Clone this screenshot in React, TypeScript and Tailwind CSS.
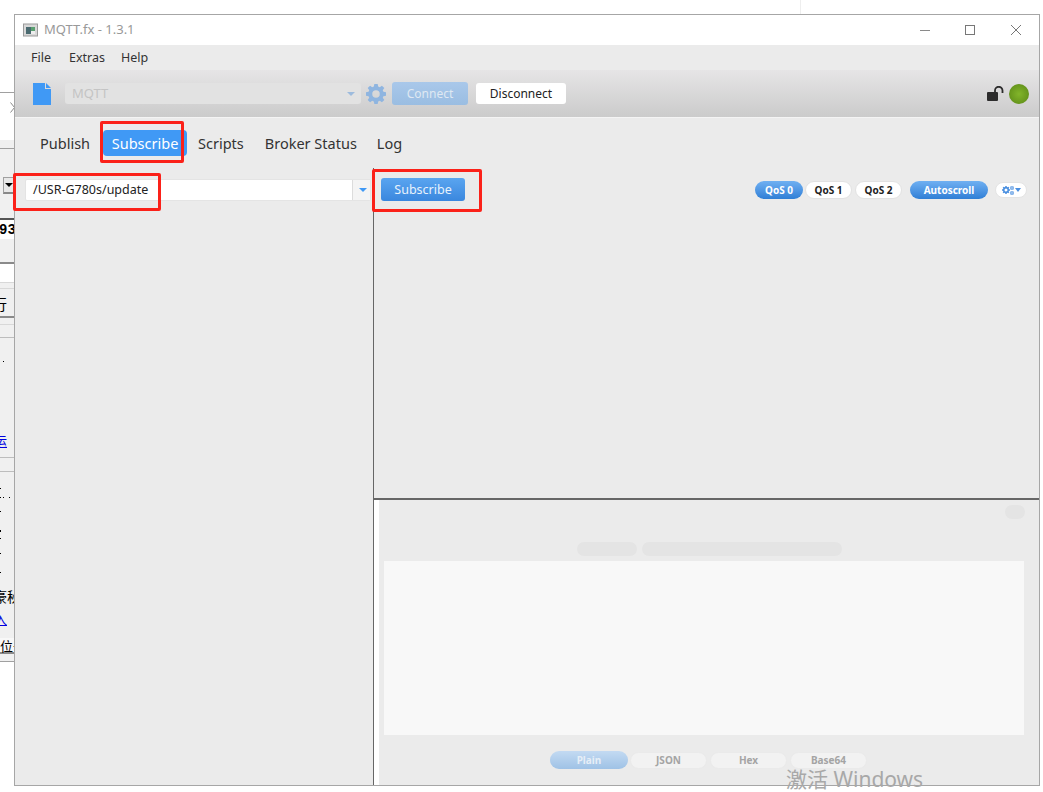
import React from "react";

const font = { fontFamily: '"Noto Sans", "Noto Sans CJK SC", sans-serif' };

const dots: [number, number][] = [
  [3, 361], [0, 488], [0, 497], [3, 497], [9, 497], [0, 511], [0, 530], [0, 531], [0, 538], [0, 553], [0, 572],
];

function Gear({ className, color }: { className?: string; color: string }) {
  return (
    <svg viewBox="0 0 24 24" className={className} fill={color}>
      <path d="M10 1h4l.6 3.100 1.900.8L19.100 3 22 5.900l-1.900 2.600.8 1.900L24 11v4l-3.100.6-.8 1.900 1.900 2.600-2.900 2.900-2.600-1.900-1.900.8L14 25h-4l-.6-3.100-1.900-.8L4.900 23 2 20.100l1.900-2.600-.8-1.900L0 15v-4l3.100-.6.8-1.900L2 5.900 4.900 3l2.600 1.900 1.900-.8zM12 8.500a4.500 4.500 0 1 0 0 9 4.500 4.500 0 0 0 0-9z" transform="translate(0 -1)" fillRule="evenodd" />
    </svg>
  );
}

function Pill({ children, on, className }: { children: React.ReactNode; on?: boolean; className: string }) {
  return (
    <div
      className={`flex h-[18px] items-center justify-center rounded-full text-[10px] font-bold ${
        on
          ? "bg-gradient-to-b from-[#6fb0f2] to-[#2f7fd6] text-white"
          : "border border-[#e2e2e2] bg-white text-[#222]"
      } ${className}`}
    >
      {children}
    </div>
  );
}

function Ghost({ children, className }: { children: React.ReactNode; className: string }) {
  return (
    <div className={`flex h-[17px] items-center justify-center rounded-full border border-[#eaeaea] bg-[#f2f2f2] text-[10px] font-bold text-[#a4a4a4] ${className}`}>
      {children}
    </div>
  );
}

function Strip() {
  return (
    <div className="relative h-full w-[14px] shrink-0 overflow-hidden bg-[#f0f0f0] text-black">
      {/* stacked bands of the window behind */}
      <div className="h-[92px] bg-white" />
      <div className="h-[48px] border-t border-[#a0a0a0] bg-white" />
      <div className="h-[8px]" />
      <div className="h-[70px] border-t border-[#a0a0a0]" />
      <div className="h-[21px] border-t-2 border-[#555] bg-white" />
      <div className="h-[23px]" />
      <div className="h-[2px] bg-[#8a8a8a]" />
      <div className="h-[18px] bg-white" />
      <div className="h-[7px] border-y border-[#d8d8d8]" />
      <div className="h-[27px]" />
      <div className="h-[2px] bg-[#8a8a8a]" />
      <div className="h-[6px]" />
      <div className="h-[13px] border-t border-[#d8d8d8]" />
      <div className="h-[120px] border-t border-[#bdbdbd]" />
      <div className="h-[14px] border-t border-[#bdbdbd]" />
      <div className="h-[167px] border-t border-[#bdbdbd]" />
      <div className="h-[14px] bg-[#f8f8f8]" />
      <div className="h-[2px] bg-[#8a8a8a]" />
      <div className="h-[7px]" />
      <div className="h-[131px] border-t border-[#a0a0a0] bg-white" />

      {/* clipped fragments of that window, freely placed */}
      <svg width="5" height="11" viewBox="0 0 5 11" className="absolute left-[10px] top-[102px]">
        <path d="M0.500 0.500l4 5-4 5" fill="none" stroke="#8a8a8a" />
      </svg>
      <div className="absolute left-[3px] top-[177px] flex h-[17px] w-[11px] items-center justify-center border-b-2 border-l border-t border-b-[#888] border-l-[#a0a0a0] border-t-[#a0a0a0] bg-[#e8e8e8]">
        <span className="h-0 w-0 border-x-[4px] border-t-[4px] border-x-transparent border-t-black" />
      </div>
      <span className="absolute -left-[1px] top-[222px] font-mono text-[14px] font-bold leading-[16px]">93</span>
      <span className="absolute -left-[8px] top-[294px] text-[15px] leading-[20px]" style={font}>行</span>
      <span className="absolute -left-[6px] top-[433px] text-[13px] leading-[16px] text-[#0000e0] underline" style={font}>运</span>
      <span className="absolute -left-[7px] top-[589px] whitespace-nowrap text-[14px] leading-[16px]" style={font}>豪秘</span>
      <span className="absolute -left-[6px] top-[611px] text-[13px] leading-[16px] text-[#0000e0] underline" style={font}>入</span>
      <span className="absolute left-0 top-[638px] whitespace-nowrap text-[13px] leading-[16px]" style={font}>位于</span>
      {dots.map(([x, y]) => (
        <div key={`${x}-${y}`} className="absolute h-px w-px bg-black" style={{ left: x, top: y }} />
      ))}
    </div>
  );
}

export default function App() {
  return (
    <div className="relative flex h-[792px] w-[1043px] overflow-hidden bg-white" style={font}>
      <Strip />

      <div className="mb-[6px] mt-[14px] flex w-[1026px] shrink-0 flex-col border border-[#a6a6a6] bg-[#ebebeb]">
        {/* title bar */}
        <div className="flex h-[30px] shrink-0 items-center bg-white pl-[8px] text-[13px] text-[#999]">
          <svg width="15" height="14" viewBox="0 0 15 14" className="mr-[6px]">
            <rect x="0.500" y="1" width="14" height="12" fill="#d8d8d8" stroke="#9a9a9a" />
            <rect x="3" y="4" width="5" height="7" fill="#4a6a70" />
            <rect x="8" y="4" width="4" height="4" fill="#5aa070" />
            <rect x="8" y="8" width="4" height="3" fill="#eeeeee" />
          </svg>
          <span>MQTT.fx - 1.3.1</span>
          <div className="ml-auto flex items-center">
            <div className="h-px w-[10px] bg-[#8a8a8a]" />
            <div className="ml-[35px] h-[10px] w-[10px] border border-[#777]" />
            <svg width="12" height="12" viewBox="0 0 12 12" className="ml-[35px] mr-[17px]">
              <path d="M1 1l10 10M11 1L1 11" stroke="#777" strokeWidth="1" />
            </svg>
          </div>
        </div>

        {/* menu */}
        <div className="flex h-[25px] shrink-0 items-center gap-[18px] bg-[#ebebeb] pl-[16px] pt-[1px] text-[12.500px] text-[#333]">
          <span>File</span>
          <span>Extras</span>
          <span className="-ml-[2px]">Help</span>
        </div>

        {/* toolbar */}
        <div className="flex h-[48px] shrink-0 items-center border-b border-[#f4f4f4] bg-gradient-to-b from-[#e6e5e6] to-[#cbcbcb] pl-[17px]">
          <svg width="20" height="24" viewBox="0 0 20 24" className="shrink-0">
            <path d="M1 1h12v6h6v16H1z" fill="#4099f5" />
            <path d="M14 1l5 5h-5z" fill="#4099f5" />
          </svg>
          <div className="ml-[13px] flex h-[21px] w-[296px] items-center justify-between rounded-[3px] bg-[#e2e2e2] pl-[7px] pr-[6px] text-[13px] text-[#c4c4c4]">
            <span>MQTT</span>
            <span className="h-0 w-0 border-x-[4px] border-t-[4px] border-x-transparent border-t-[#9dbbdd]" />
          </div>
          <Gear className="ml-[5px] h-[20px] w-[20px]" color="#8fb5e0" />
          <div className="ml-[6px] flex h-[23px] w-[76px] items-center justify-center rounded-[3px] bg-gradient-to-b from-[#a9c8ea] to-[#9abde2] text-[12px] text-[#dfe8f2]">
            Connect
          </div>
          <div className="ml-[8px] flex h-[21px] w-[90px] items-center justify-center rounded-[3px] bg-white text-[12px] text-[#222]">
            Disconnect
          </div>
          <div className="ml-auto mr-[10px] flex items-center gap-[5px]">
            <svg width="17" height="15" viewBox="0 0 17 15">
              <rect x="0" y="6" width="11" height="9" rx="1" fill="#2c2c2c" />
              <path d="M8 6V4.500a3.700 3.700 0 0 1 7.500 0V7" fill="none" stroke="#2c2c2c" strokeWidth="1.800" />
            </svg>
            <div className="h-[20px] w-[20px] rounded-full bg-[radial-gradient(circle,#82b52a_0%,#6a9a1e_60%,#567f18_100%)]" />
          </div>
        </div>

        {/* tabs */}
        <div className="flex h-[50px] shrink-0 items-center pl-[25px] text-[14.500px] text-[#333]">
          <span className="pt-[2px]">Publish</span>
          <span className="ml-[13px] flex h-[26px] w-[84px] items-center justify-center rounded-[4px] bg-[#4099f5] pt-[1px] text-white">Subscribe</span>
          <span className="ml-[11px] pt-[2px]">Scripts</span>
          <span className="ml-[21px] pt-[2px]">Broker Status</span>
          <span className="ml-[20px] pt-[2px]">Log</span>
        </div>

        {/* main */}
        <div className="flex min-h-0 flex-1">
          <div className="w-[358px] shrink-0 pl-[10px] pr-[2px] pt-[11px]">
            <div className="flex h-[22px] items-center rounded-[2px] border border-[#e4e4e4] bg-white text-[12.500px] text-[#222]">
              <span className="flex-1 pl-[7px]">/USR-G780s/update</span>
              <span className="flex h-full w-[18px] items-center justify-center border-l border-[#dcdcdc] bg-[#f4f4f4] pl-[3px]">
                <span className="h-0 w-0 border-x-[4px] border-t-[4px] border-x-transparent border-t-[#4099f5]" />
              </span>
            </div>
          </div>

          <div className="flex min-w-0 flex-1 flex-col border-l border-[#666]">
            <div className="flex h-[332px] shrink-0 flex-col border-b-2 border-[#666]">
              <div className="flex items-center pl-[7px] pr-[12px] pt-[10px]">
                <div className="flex h-[23px] w-[84px] items-center justify-center rounded-[3px] bg-gradient-to-b from-[#5aa5f0] to-[#3a87de] pt-[1px] text-[12.500px] text-[#e8f2fc]">
                  Subscribe
                </div>
                <div className="ml-auto mt-[1px] flex items-center">
                  <Pill on className="w-[48px]">QoS 0</Pill>
                  <Pill className="ml-[2px] w-[47px]">QoS 1</Pill>
                  <Pill className="ml-[3px] w-[47px]">QoS 2</Pill>
                  <Pill on className="ml-[8px] w-[78px]">Autoscroll</Pill>
                  <div className="relative ml-[7px] flex h-[16px] w-[32px] items-center justify-center rounded-full border border-[#e4e4e4] bg-white">
                    <Gear className="h-[8px] w-[8px]" color="#4a8fe0" />
                    <div className="mr-[1px] flex flex-col gap-[1px]">
                      <Gear className="h-[4px] w-[4px]" color="#4a8fe0" />
                      <Gear className="h-[4px] w-[4px]" color="#4a8fe0" />
                    </div>
                    <span className="h-0 w-0 border-x-[3px] border-t-[4px] border-x-transparent border-t-[#4a8fe0]" />
                  </div>
                </div>
              </div>
            </div>

            <div className="flex min-h-0 flex-1">
              <div className="w-[5px] shrink-0 bg-white" />
              <div className="flex min-w-0 flex-1 flex-col pl-[5px] pr-[15px]">
                <div className="mt-[5px] -mr-[1px] flex justify-end">
                  <div className="h-[14px] w-[20px] rounded-full bg-[#e4e4e4]" />
                </div>
                <div className="mt-[23px] flex gap-[5px] pl-[193px]">
                  <div className="h-[14px] w-[60px] rounded-full bg-[#e4e4e4]" />
                  <div className="h-[14px] w-[200px] rounded-full bg-[#e4e4e4]" />
                </div>
                <div className="mt-[5px] h-[174px] shrink-0 bg-[#f8f8f8]" />
                <div className="mt-[16px] flex items-center pl-[166px]">
                  <div className="flex h-[18px] w-[78px] items-center justify-center rounded-full bg-gradient-to-b from-[#c3daf2] to-[#9fc2e6] text-[10px] font-bold text-[#e6eef7]">
                    Plain
                  </div>
                  <Ghost className="ml-[2px] w-[77px]">JSON</Ghost>
                  <Ghost className="ml-[3px] w-[77px]">Hex</Ghost>
                  <Ghost className="ml-[3px] w-[77px]">Base64</Ghost>
                </div>
              </div>
            </div>
          </div>
        </div>
      </div>

      {/* faint divider above the window */}
      <div className="absolute left-[800px] top-0 h-[14px] border-l border-[#eeeeee]" />

      {/* red annotation boxes */}
      <div className="absolute left-[100px] top-[121px] h-[42px] w-[84px] rounded-[2px] border-[3px] border-[#fb2119]" />
      <div className="absolute left-[13px] top-[173px] h-[38px] w-[148px] rounded-[2px] border-[3px] border-[#fb2119]" />
      <div className="absolute left-[372px] top-[169px] h-[43px] w-[110px] rounded-[2px] border-[3px] border-[#fb2119]" />

      {/* watermark */}
      <div className="absolute left-[786px] top-[765px] text-[21px] leading-[28px] text-[#a8a8a8]">激活 Windows</div>
    </div>
  );
}
